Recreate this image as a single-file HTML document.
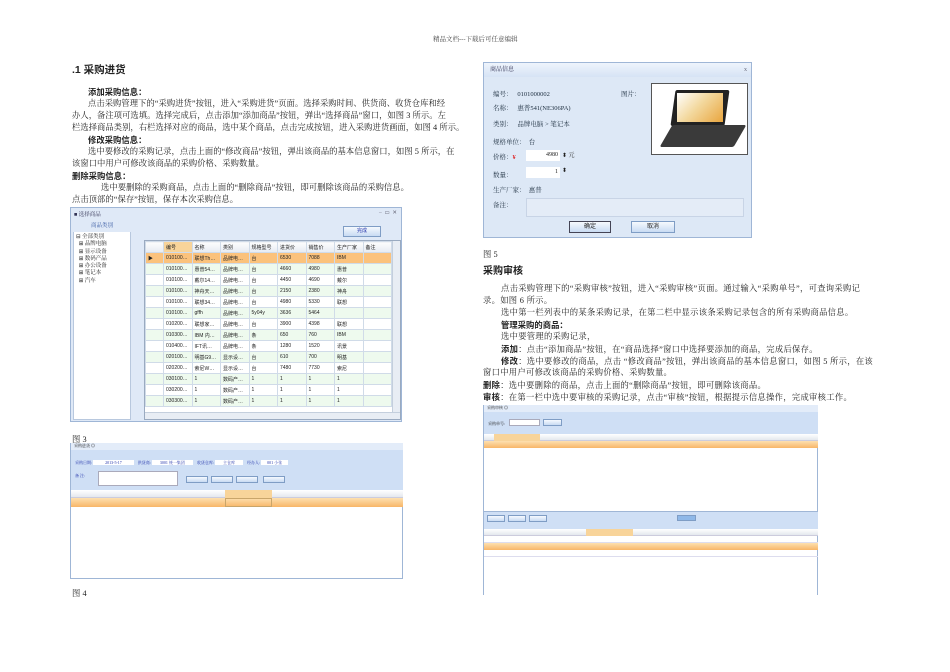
<!DOCTYPE html>
<html><head><meta charset="utf-8"><style>
*{margin:0;padding:0;box-sizing:border-box}
body{width:950px;height:672px;background:#fff;position:relative;overflow:hidden;font-family:"Liberation Serif","Noto Serif CJK SC",serif;color:#222}
.a{position:absolute;white-space:nowrap}
.t{font-size:8.3px;line-height:12px;letter-spacing:0.05px}
.r{letter-spacing:0.3px}
.b{font-weight:bold;font-family:"Liberation Sans","Noto Sans CJK SC",sans-serif}
.win{position:absolute;background:#dfe9f7;border:1px solid #9fb6d6;overflow:hidden}
table{border-collapse:collapse;font-size:5px;font-family:"Liberation Sans","Noto Sans CJK SC",sans-serif}
td{border:1px solid #d0dbe8;padding:0 2px;height:11px;white-space:nowrap;overflow:hidden}
.hd td{background:linear-gradient(#fdfdfd,#e6ebf2);height:11px}
.sel td{background:#fbc27c}
.g td{background:#eefaee}
.btn{position:absolute;background:linear-gradient(#f6f9fe,#c9dbf3);border:1px solid #7f9dc5;font-size:5px;text-align:center;font-family:"Liberation Sans","Noto Sans CJK SC",sans-serif}
.lb{position:absolute;font-size:6.5px;color:#234;white-space:nowrap}
</style></head><body>
<div class="a" style="left:433px;top:34px;font-size:6.5px;color:#444">精品文档---下载后可任意编辑</div>

<div class="a b" style="left:72px;top:62px;font-size:10.5px">.1 采购进货</div>
<div class="a t b" style="left:88px;top:86px">添加采购信息：</div>
<div class="a t" style="left:88px;top:98px">点击采购管理下的“采购进货”按钮，进入“采购进货”页面。选择采购时间、供货商、收货仓库和经</div>
<div class="a t" style="left:72px;top:110px">办人，备注项可选填。选择完成后，点击添加“添加商品”按钮，弹出“选择商品”窗口，如图 3 所示。左</div>
<div class="a t" style="left:72px;top:122px">栏选择商品类别，右栏选择对应的商品，选中某个商品，点击完成按钮，进入采购进货画面，如图 4 所示。</div>
<div class="a t b" style="left:88px;top:134px">修改采购信息：</div>
<div class="a t" style="left:88px;top:146px">选中要修改的采购记录，点击上面的“修改商品”按钮，弹出该商品的基本信息窗口，如图 5 所示，在</div>
<div class="a t" style="left:72px;top:158px">该窗口中用户可修改该商品的采购价格、采购数量。</div>
<div class="a t b" style="left:72px;top:170px">删除采购信息：</div>
<div class="a t" style="left:101px;top:182px">选中要删除的采购商品，点击上面的“删除商品”按钮，即可删除该商品的采购信息。</div>
<div class="a t" style="left:72px;top:194px">点击顶部的“保存”按钮，保存本次采购信息。</div>

<!-- fig3 -->
<div class="win" style="left:70px;top:207px;width:332px;height:215px">
 <div class="a" style="left:3px;top:2px;font-size:5.5px;color:#335">■ 选择商品</div>
 <div class="a" style="right:4px;top:2px;font-size:5.5px;color:#667">–&nbsp;&nbsp;▭&nbsp;&nbsp;✕</div>
 <div class="a" style="left:2px;top:12px;width:58px;height:200px;background:#fff;border:1px solid #b8c8de"></div>
 <div class="a" style="left:2px;top:12px;width:58px;height:12px;background:#dfe9f7;font-size:5.5px;color:#3456a0;text-align:center;line-height:12px">商品类别</div>
 <div class="a" style="left:5px;top:26px;font-size:5.5px;line-height:7.3px">⊟ 全部类别<br>&nbsp;&nbsp;⊞ 品牌电脑<br>&nbsp;&nbsp;⊞ 显示设备<br>&nbsp;&nbsp;⊞ 数码产品<br>&nbsp;&nbsp;⊞ 办公设备<br>&nbsp;&nbsp;⊞ 笔记本<br>&nbsp;&nbsp;⊞ 汽车</div>
 <div class="btn" style="left:272px;top:18px;width:38px;height:11px;line-height:9px;color:#23a">完成</div>
 <div class="a" style="left:73px;top:32px;width:257px;height:180px;background:#fff;border:1px solid #9aaac0;overflow:hidden">
 <table style="width:247px;table-layout:fixed">
 <tr class="hd"><td style="width:18px"></td><td style="background:#f8d49a">编号</td><td>名称</td><td>类别</td><td>规格型号</td><td>进货价</td><td>销售价</td><td>生产厂家</td><td>备注</td></tr>
 <tr class="sel"><td>▶</td><td>010100…</td><td>联想Th…</td><td>品牌电…</td><td>台</td><td>6530</td><td>7088</td><td>IBM</td><td></td></tr>
 <tr class="g"><td></td><td>010100…</td><td>惠普54…</td><td>品牌电…</td><td>台</td><td>4660</td><td>4980</td><td>惠普</td><td></td></tr>
 <tr><td></td><td>010100…</td><td>戴尔14…</td><td>品牌电…</td><td>台</td><td>4450</td><td>4690</td><td>戴尔</td><td></td></tr>
 <tr class="g"><td></td><td>010100…</td><td>神舟天…</td><td>品牌电…</td><td>台</td><td>2150</td><td>2380</td><td>神舟</td><td></td></tr>
 <tr><td></td><td>010100…</td><td>联想34…</td><td>品牌电…</td><td>台</td><td>4980</td><td>5330</td><td>联想</td><td></td></tr>
 <tr class="g"><td></td><td>010100…</td><td>gffh</td><td>品牌电…</td><td>5y04y</td><td>3636</td><td>5464</td><td></td><td></td></tr>
 <tr><td></td><td>010200…</td><td>联想家…</td><td>品牌电…</td><td>台</td><td>3900</td><td>4398</td><td>联想</td><td></td></tr>
 <tr class="g"><td></td><td>010300…</td><td>IBM 内…</td><td>品牌电…</td><td>条</td><td>650</td><td>760</td><td>IBM</td><td></td></tr>
 <tr><td></td><td>010400…</td><td>IFT讯…</td><td>品牌电…</td><td>条</td><td>1280</td><td>1520</td><td>讯景</td><td></td></tr>
 <tr class="g"><td></td><td>020100…</td><td>明基G9…</td><td>显示设…</td><td>台</td><td>610</td><td>700</td><td>明基</td><td></td></tr>
 <tr><td></td><td>020200…</td><td>索尼W…</td><td>显示设…</td><td>台</td><td>7480</td><td>7730</td><td>索尼</td><td></td></tr>
 <tr class="g"><td></td><td>030100…</td><td>1</td><td>数码产…</td><td>1</td><td>1</td><td>1</td><td>1</td><td></td></tr>
 <tr><td></td><td>030200…</td><td>1</td><td>数码产…</td><td>1</td><td>1</td><td>1</td><td>1</td><td></td></tr>
 <tr class="g"><td></td><td>030300…</td><td>1</td><td>数码产…</td><td>1</td><td>1</td><td>1</td><td>1</td><td></td></tr>
 </table>
 <div class="a" style="right:0;top:0;width:8px;height:180px;background:#e8edf4;border-left:1px solid #c4cfdd"></div>
 <div class="a" style="left:0;bottom:0;width:257px;height:7px;background:#e8edf4;border-top:1px solid #c4cfdd"></div>
 </div>
</div>
<div class="a t" style="left:72px;top:434px">图 3</div>

<!-- fig4 -->
<div class="a" style="left:70px;top:443px;width:333px;height:136px;border:1px solid #9fb6d6;border-top:0;background:#fff">
 <div class="a" style="left:0;top:0;width:332px;height:7px;background:#e3ecf9;font-size:4px;padding-left:3px">采购进货 ◎</div>
 <div class="a" style="left:0;top:7px;width:332px;height:40px;background:#cfdff5"></div>
 <div class="a" style="left:4px;top:17px;font-size:4px;color:#23a">采购日期: <span style="background:#fff;padding:0 12px">2013-5-17</span> &nbsp;&nbsp; 供货商: <span style="background:#fff;padding:0 8px">3001 统一集团</span> &nbsp;&nbsp; 收货仓库: <span style="background:#fff;padding:0 8px">主仓库</span> &nbsp;&nbsp; 经办人: <span style="background:#fff;padding:0 6px">001 小张</span></div>
 <div class="a" style="left:4px;top:30px;font-size:4px;color:#23a">备 注:</div>
 <div class="a" style="left:27px;top:28px;width:80px;height:15px;background:#fff;border:1px solid #aab"></div>
 <div class="btn" style="left:115px;top:33px;width:22px;height:7px"></div>
 <div class="btn" style="left:140px;top:33px;width:22px;height:7px"></div>
 <div class="btn" style="left:165px;top:33px;width:22px;height:7px"></div>
 <div class="btn" style="left:192px;top:33px;width:22px;height:7px"></div>
 <div class="a" style="left:0;top:47px;width:332px;height:8px;background:linear-gradient(#fff,#e4e8ee);border-bottom:1px solid #ccd"></div>
 <div class="a" style="left:154px;top:47px;width:47px;height:8px;background:#f8d49a"></div>
 <div class="a" style="left:0;top:55px;width:332px;height:9px;background:linear-gradient(#fde0b0,#f8b668)"></div>
 <div class="a" style="left:154px;top:55px;width:47px;height:9px;border:1px solid #c9a56a"></div>
</div>
<div class="a t" style="left:72px;top:588px">图 4</div>

<!-- fig5 -->
<div class="win" style="left:483px;top:62px;width:269px;height:176px;background:#dde8f6">
 <div class="a" style="left:0;top:0;width:269px;height:14px;background:linear-gradient(#eef4fc,#d6e3f5);font-size:6px;line-height:14px;padding-left:6px;color:#335">商品信息<span style="position:absolute;right:6px;color:#667">x</span></div>
 <div class="lb" style="left:9px;top:26px">编号： &nbsp;&nbsp;0101000002</div>
 <div class="lb" style="left:9px;top:40px">名称： &nbsp;&nbsp;惠普541(NE306PA)</div>
 <div class="lb" style="left:9px;top:56px">类别： &nbsp;&nbsp;品牌电脑 &gt; 笔记本</div>
 <div class="lb" style="left:9px;top:74px">规格单位： &nbsp;台</div>
 <div class="lb" style="left:9px;top:89px">价格：<span style="color:#d00">¥</span></div>
 <div class="lb" style="left:9px;top:107px">数量：</div>
 <div class="lb" style="left:9px;top:122px">生产厂家： &nbsp;惠普</div>
 <div class="lb" style="left:9px;top:137px">备注：</div>
 <div class="lb" style="left:137px;top:26px">图片：</div>
 <div class="a" style="left:167px;top:20px;width:97px;height:72px;background:#fff;border:1px solid #555"></div>
 <div class="a" style="left:189px;top:27px;width:54px;height:36px;background:#222;transform:skewX(-8deg);border-radius:2px"></div>
 <div class="a" style="left:193px;top:30px;width:46px;height:29px;background:linear-gradient(135deg,#fff,#f3d9a0 45%,#e9a53e)"></div>
 <div class="a" style="left:182px;top:62px;width:74px;height:22px;background:#3a3a3a;transform:skewX(-30deg);border-radius:2px"></div>
 <div class="a" style="left:42px;top:87px;width:34px;height:11px;background:#fff;font-size:6px;text-align:right;padding-right:2px;line-height:11px">4980</div>
 <div class="a" style="left:78px;top:87px;font-size:6px">⬍ 元</div>
 <div class="a" style="left:42px;top:104px;width:34px;height:11px;background:#fff;font-size:6px;text-align:right;padding-right:2px;line-height:11px">1</div>
 <div class="a" style="left:78px;top:104px;font-size:6px">⬍</div>
 <div class="a" style="left:42px;top:135px;width:218px;height:19px;background:#e4ecf7;border:1px solid #c8d4e6"></div>
 <div class="btn" style="left:85px;top:158px;width:42px;height:12px;font-size:6px;line-height:10px;border-color:#445">确定</div>
 <div class="btn" style="left:147px;top:158px;width:44px;height:12px;font-size:6px;line-height:10px">取消</div>
</div>

<div class="a t" style="left:483px;top:249px">图 5</div>
<div class="a b" style="left:483px;top:262px;font-size:10px">采购审核</div>
<div class="a t r" style="left:501px;top:283px">点击采购管理下的“采购审核”按钮，进入“采购审核”页面。通过输入“采购单号”，可查询采购记</div>
<div class="a t r" style="left:483px;top:295px">录。如图 6 所示。</div>
<div class="a t r" style="left:501px;top:307px">选中第一栏列表中的某条采购记录，在第二栏中显示该条采购记录包含的所有采购商品信息。</div>
<div class="a t b" style="left:501px;top:319px">管理采购的商品：</div>
<div class="a t r" style="left:501px;top:331px">选中要管理的采购记录，</div>
<div class="a t r" style="left:501px;top:343px"><b class="b">添加</b>：点击“添加商品”按钮，在“商品选择”窗口中选择要添加的商品，完成后保存。</div>
<div class="a t r" style="left:501px;top:355px"><b class="b">修改</b>：选中要修改的商品，点击 “修改商品”按钮，弹出该商品的基本信息窗口，如图 5 所示，在该</div>
<div class="a t r" style="left:483px;top:367px">窗口中用户可修改该商品的采购价格、采购数量。</div>
<div class="a t r" style="left:483px;top:379px"><b class="b">删除</b>：选中要删除的商品，点击上面的“删除商品”按钮，即可删除该商品。</div>
<div class="a t r" style="left:483px;top:391px"><b class="b">审核</b>：在第一栏中选中要审核的采购记录，点击“审核”按钮，根据提示信息操作，完成审核工作。</div>

<!-- fig6 -->
<div class="a" style="left:483px;top:405px;width:335px;height:190px;border:1px solid #9fb6d6;border-top:0;border-bottom:0;background:#fff">
 <div class="a" style="left:0;top:0;width:334px;height:7px;background:#e3ecf9;font-size:4px;padding-left:3px">采购审核 ◎</div>
 <div class="a" style="left:0;top:7px;width:334px;height:22px;background:#cfdff5"></div>
 <div class="a" style="left:4px;top:16px;font-size:4px">采购单号:</div>
 <div class="a" style="left:25px;top:14px;width:31px;height:7px;background:#fff;border:1px solid #aab"></div>
 <div class="btn" style="left:59px;top:14px;width:19px;height:7px"></div>
 <div class="a" style="left:0;top:29px;width:334px;height:7px;background:linear-gradient(#fff,#e4e8ee);border-bottom:1px solid #ccd"></div>
 <div class="a" style="left:10px;top:29px;width:46px;height:7px;background:#f8d49a"></div>
 <div class="a" style="left:0;top:36px;width:334px;height:7px;background:linear-gradient(#fde0b0,#f8b668)"></div>
 <div class="a" style="left:0;top:106px;width:334px;height:18px;background:#cfdff5;border-top:1px solid #9fb6d6"></div>
 <div class="btn" style="left:3px;top:110px;width:18px;height:7px"></div>
 <div class="btn" style="left:24px;top:110px;width:18px;height:7px"></div>
 <div class="btn" style="left:45px;top:110px;width:18px;height:7px"></div>
 <div class="btn" style="left:193px;top:110px;width:19px;height:6px;background:#8fb8e8"></div>
 <div class="a" style="left:0;top:124px;width:334px;height:7px;background:linear-gradient(#fff,#e4e8ee);border-bottom:1px solid #ccd"></div>
 <div class="a" style="left:102px;top:124px;width:47px;height:7px;background:#f8d49a"></div>
 <div class="a" style="left:0;top:131px;width:334px;height:7px;border-bottom:1px solid #dde"></div>
 <div class="a" style="left:0;top:138px;width:334px;height:7px;background:linear-gradient(#fde0b0,#f8b668)"></div>
 <div class="a" style="left:0;top:145px;width:334px;height:7px;border-bottom:1px solid #dde"></div>
</div>
</body></html>
